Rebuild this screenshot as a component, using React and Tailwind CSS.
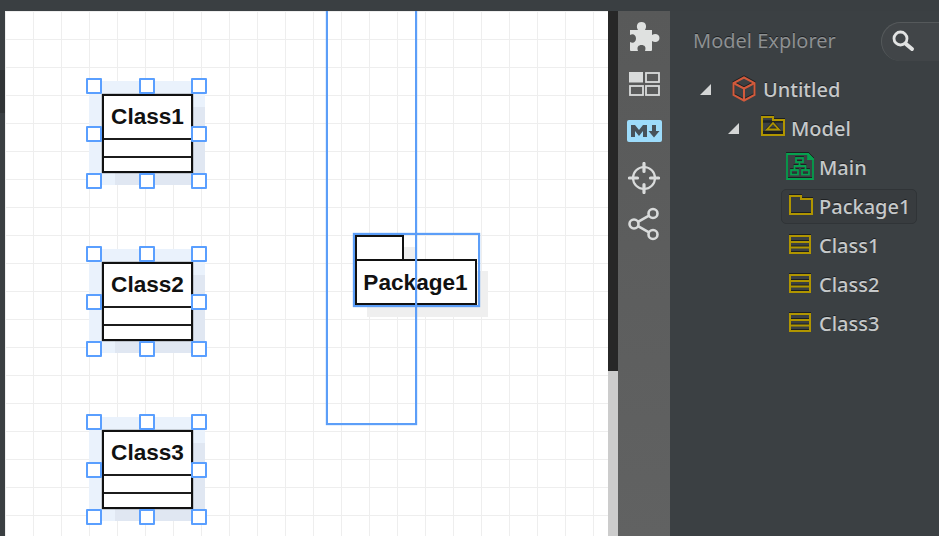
const handleClass =
  "absolute w-[16px] h-[16px] bg-white border-2 border-[#5a9fff] rounded-[1px]";

const ClassNode = ({ name, top }) => (
  <div className="absolute left-[84px] w-[120px] h-[109px]" style={{ top }}>
    {/* halo + shadow */}
    <div className="absolute left-0 top-0 w-[116px] h-[104px] bg-[#eaf2fc]" />
    <div className="absolute left-[26px] top-[26px] w-[90px] h-[78px] bg-[#e0e7f2]" />
    <div className="absolute left-[13px] top-[13px] w-[91px] h-[79px] bg-white border-2 border-[#111] shadow-[0_0_1px_#111] flex flex-col">
      <div className="h-[44px] flex items-center justify-center font-['Liberation_Sans',sans-serif] font-bold text-[22.6px] text-[#111] border-b-2 border-[#1c1c1c]">
        {name}
      </div>
      <div className="h-[18px] border-b-2 border-[#1c1c1c]" />
    </div>
    <div className={handleClass + " left-[-3px] top-[-3px]"} />
    <div className={handleClass + " left-[50px] top-[-3px]"} />
    <div className={handleClass + " left-[102px] top-[-3px]"} />
    <div className={handleClass + " left-[-3px] top-[45px]"} />
    <div className={handleClass + " left-[102px] top-[45px]"} />
    <div className={handleClass + " left-[-3px] top-[92px]"} />
    <div className={handleClass + " left-[50px] top-[92px]"} />
    <div className={handleClass + " left-[102px] top-[92px]"} />
  </div>
);

const PackageNode = () => (
  <div className="absolute left-[348px] top-[222px] w-[140px] h-[90px]">
    <div className="absolute left-[14px] top-[14px] w-[48px] h-[30px] bg-[#efefef]" />
    <div className="absolute left-[14px] top-[38px] w-[121px] h-[46px] bg-[#efefef]" />
    <div className="absolute left-[2px] top-[2px] w-[49px] h-[26px] bg-white border-2 border-[#111]" />
    <div className="absolute left-[2px] top-[26px] w-[122px] h-[46px] bg-white border-2 border-[#111] flex items-center justify-center pt-[1px] pr-[1px] font-['Liberation_Sans',sans-serif] font-bold text-[22.6px] text-[#111]">
      Package1
    </div>
    <div className="absolute left-0 top-0 w-[127px] h-[74px] border-2 border-[#5c9ef8] shadow-[0_0_1px_#5c9ef8]" />
  </div>
);

const PuzzleIcon = () => (
  <svg width="32" height="31" viewBox="0 0 32 31">
    <path
      d="M2 9H10C8 6 8.500 1 13.500 1C18.500 1 19 6 17 9H24V14C27 12 31.500 13 31.500 17C31.500 21 27 22 24 20V29Q24 30 23 30H17C18.500 26 16.500 24 13.500 24C10.500 24 8.500 26 10 30H3Q2 30 2 29V21C5 23 8 21 8 17.500C8 14 5 12 2 14Z"
      fill="#dfe1e0"
    />
  </svg>
);

const LayoutIcon = () => (
  <svg width="31" height="24" viewBox="0 0 31 24" fill="none" stroke="#d9dbdb" strokeWidth="1.8">
    <rect x="0" y="0" width="14" height="10.500" fill="#d9dbdb" stroke="none" />
    <rect x="17" y="1" width="13" height="9" />
    <rect x="1" y="14" width="13" height="9" />
    <rect x="17" y="14" width="13" height="9" />
  </svg>
);

const MarkdownIcon = () => (
  <svg width="35" height="22" viewBox="0 0 35 22">
    <rect width="35" height="22" rx="2" fill="#9ddcfb" />
    <path d="M4 17V5h4l4 5 4-5h4v12h-4v-6l-4 5-4-5v6z" fill="#47525a" />
    <path d="M25 5h4v6h3.500l-5.500 6.500L21.500 11H25z" fill="#47525a" />
  </svg>
);

const CrosshairIcon = () => (
  <svg width="32" height="32" viewBox="0 0 32 32" fill="none" stroke="#d9dbdb" strokeLinecap="round">
    <circle cx="16" cy="16" r="11" strokeWidth="2.200" />
    <path d="M16 1.500v8M16 22.500v8M1.500 16h8M22.500 16h8" strokeWidth="3.200" />
  </svg>
);

const ShareIcon = () => (
  <svg width="32" height="34" viewBox="0 0 32 34" fill="none" stroke="#d9dbdb" strokeWidth="2.600">
    <circle cx="25" cy="6.500" r="4.500" />
    <circle cx="6" cy="17" r="4.500" />
    <circle cx="25" cy="27.500" r="4.500" />
    <path d="M10 14.800l11-6.200M10 19.200l11 6.200" />
  </svg>
);

const Arrow = () => (
  <svg width="11" height="11" viewBox="0 0 11 11" className="shrink-0">
    <path d="M11 0v11H0z" fill="#d4d6d6" />
  </svg>
);

const iconShadow = "[filter:drop-shadow(0_-1px_0_#1c1f21)]";

const CubeIcon = () => (
  <svg width="24" height="26" viewBox="0 0 24 26" fill="none" stroke="#d25a3c" strokeWidth="2" className={iconShadow}>
    <path d="M12 1.500l10.500 5.500v12L12 24.500 1.500 19V7z" />
    <path d="M1.500 7L12 12.500 22.500 7M12 12.500v12" />
  </svg>
);

const ModelIcon = () => (
  <svg width="24" height="21" viewBox="0 0 24 21" fill="none" className={iconShadow}>
    <path d="M1 20V2h11v3h11v15z" stroke="#b09500" strokeWidth="2" />
    <path d="M2 7h20" stroke="#1e2123" strokeWidth="1.400" />
    <path d="M12 8l6 6.500H6z" stroke="#b09500" strokeWidth="1.800" />
    <path d="M2 17.500h20" stroke="#1e2123" strokeWidth="1.200" />
  </svg>
);

const DiagramIcon = () => (
  <svg width="28" height="27" viewBox="0 0 28 27" fill="none" stroke="#07a04f" strokeWidth="1.800" className={iconShadow}>
    <path d="M1 1h21l5 5v20H1z" />
    <path d="M22 1l5 5h-5z" fill="#07a04f" />
    <rect x="10" y="5" width="7" height="4" />
    <rect x="5" y="17" width="7" height="4.500" />
    <rect x="16" y="17" width="7" height="4.500" />
    <path d="M13.500 9v4M8.500 17v-4h11v4" />
  </svg>
);

const FolderIcon = () => (
  <svg width="24" height="21" viewBox="0 0 24 21" fill="none" className={iconShadow}>
    <path d="M1 20V2h11v3h11v15z" stroke="#b09500" strokeWidth="2" />
  </svg>
);

const ClassIcon = () => (
  <svg width="22" height="21" viewBox="0 0 22 21" fill="none" className={iconShadow}>
    <rect x="1" y="3" width="20" height="17" stroke="#b09500" strokeWidth="2" />
    <path d="M1 9h20M1 14.500h20" stroke="#b09500" strokeWidth="2" />
  </svg>
);

const treeText =
  "text-[20px] leading-none font-medium text-[#c6c9ca] [text-shadow:0_-1px_0_#1f2224]";

const TreeRow = ({ className, children, label }) => (
  <div className={"h-[39px] flex items-center " + className}>
    {children}
    <span className={treeText}>{label}</span>
  </div>
);

const App = () => {
  return (
    <div className="w-[939px] h-[536px] overflow-hidden flex flex-col bg-[#3a3f42] font-['Noto_Sans',sans-serif]">
      <div className="h-[11px] shrink-0 bg-[#3a3f42]" />
      <div className="flex-1 flex min-h-0">
        {/* sidebar edge */}
        <div className="w-[5px] shrink-0 flex flex-col">
          <div className="h-[59px] bg-[#3a3f42]" />
          <div className="h-[43px] bg-[#303436]" />
          <div className="flex-1 bg-[#3a3f42]" />
        </div>

        {/* canvas */}
        <div className="w-[603px] shrink-0 relative overflow-hidden bg-white bg-[linear-gradient(to_right,#eeeeee_1px,transparent_1px),linear-gradient(to_bottom,#eeeeee_1px,transparent_1px)] bg-[size:28px_28px] bg-[position:0px_0px]">
          <ClassNode name="Class1" top={70} />
          <ClassNode name="Class2" top={238} />
          <ClassNode name="Class3" top={406} />
          <PackageNode />
          <div className="absolute left-[321px] top-0 w-[91px] h-[414px] border-2 border-t-0 border-[#5c9ef8] shadow-[0_0_1px_#5c9ef8]" />
        </div>

        {/* scrollbar */}
        <div className="w-[10px] shrink-0 flex flex-col bg-[#cccccc]">
          <div className="h-[360px] bg-[#272727]" />
        </div>

        {/* icon toolbar */}
        <div className="w-[52px] shrink-0 flex flex-col items-center bg-[linear-gradient(to_bottom,#585959,#616262)] pt-[10px]">
          <PuzzleIcon />
          <div className="mt-[20px]"><LayoutIcon /></div>
          <div className="mt-[24px]"><MarkdownIcon /></div>
          <div className="mt-[20px]"><CrosshairIcon /></div>
          <div className="mt-[13px]"><ShareIcon /></div>
        </div>

        {/* model explorer */}
        <div className="flex-1 flex flex-col bg-[#3b4043]">
          <div className="h-[59px] shrink-0 flex items-center pl-[23px] pt-[1px]">
            <span className="text-[20px] leading-none text-[#8d9092] w-[188px] shrink-0 [text-shadow:0_-1px_0_#1f2224]">
              Model Explorer
            </span>
            <div className="h-[39px] flex-1 rounded-l-[20px] bg-[#414548] border-l border-t border-[#55595b] flex items-center pl-[9px] pb-[2px]">
              <svg width="24" height="24" viewBox="0 0 24 24" fill="none" stroke="#e2e3e3">
                <circle cx="9.500" cy="9.500" r="6.500" strokeWidth="2.800" />
                <path d="M15 15l6 5" strokeWidth="4" strokeLinecap="round" />
              </svg>
            </div>
          </div>
          <div className="flex flex-col">
            <TreeRow className="pl-[30px]" label="Untitled">
              <Arrow />
              <div className="ml-[21px] mr-[7px] -mt-[2px]"><CubeIcon /></div>
            </TreeRow>
            <TreeRow className="pl-[58px]" label="Model">
              <Arrow />
              <div className="ml-[22px] mr-[6px] -mt-[6px]"><ModelIcon /></div>
            </TreeRow>
            <TreeRow className="pl-[116px]" label="Main">
              <div className="mr-[5px] -mt-[2px]"><DiagramIcon /></div>
            </TreeRow>
            <div className="h-[39px] flex items-center pl-[111px]">
              <div className="h-[35px] w-[136px] flex items-center pl-[7px] rounded-[5px] bg-[#383c3f] border border-[#303437]">
                <div className="mr-[6px] -mt-[5px]"><FolderIcon /></div>
                <span className={treeText}>Package1</span>
              </div>
            </div>
            <TreeRow className="pl-[119px]" label="Class1">
              <div className="mr-[8px] -mt-[4px]"><ClassIcon /></div>
            </TreeRow>
            <TreeRow className="pl-[119px]" label="Class2">
              <div className="mr-[8px] -mt-[4px]"><ClassIcon /></div>
            </TreeRow>
            <TreeRow className="pl-[119px]" label="Class3">
              <div className="mr-[8px] -mt-[4px]"><ClassIcon /></div>
            </TreeRow>
          </div>
        </div>
      </div>
    </div>
  );
};

export default App;
